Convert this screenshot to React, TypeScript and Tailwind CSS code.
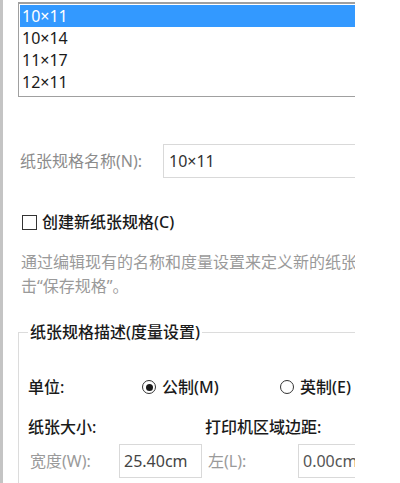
const font = "font-['Noto_Sans','Noto_Sans_CJK_SC',sans-serif]";

const sizes = ["10×11", "10×14", "11×17", "12×11"];

const Radio = ({ checked, label }: { checked?: boolean; label: string }) => (
  <div className="flex items-center">
    <span className="flex h-[14px] w-[14px] items-center justify-center rounded-full border border-[#333333] bg-white">
      {checked && <span className="h-[7px] w-[7px] rounded-full bg-[#1a1a1a]" />}
    </span>
    <span className="ml-[6px] font-medium text-[#1a1a1a]">{label}</span>
  </div>
);

const App = () => {
  return (
    <div className={`flex h-[483px] w-[400px] overflow-hidden bg-white text-[16px] ${font}`}>
      <div className="w-[3px] shrink-0 bg-[#c4c4c4]" />

      <div className="w-[352px] shrink-0 overflow-hidden pl-[15px]">
        {/* size list */}
        <div className="mt-[2px] w-[380px] border-t-2 border-b border-l border-[#a0a0a0] pt-[1px] pb-[3px] pl-[1px]">
          {sizes.map((s, i) => (
            <div
              key={s}
              className={`h-[22px] pl-[2px] leading-[22px] ${
                i === 0 ? "bg-[#3399ff] text-white" : "text-[#1a1a1a]"
              }`}
            >
              {s}
            </div>
          ))}
        </div>

        {/* name */}
        <div className="mt-[47px] flex items-center">
          <span className="w-[145px] shrink-0 pl-[2px] text-[#8c8c8c]">纸张规格名称(N):</span>
          <div className="flex h-[34px] w-[220px] shrink-0 items-center border border-[#d9d9d9] pl-[5px] text-[#333333]">
            10×11
          </div>
        </div>

        {/* checkbox */}
        <div className="mt-[33px] flex h-[22px] items-center pl-[4px]">
          <span className="h-[15px] w-[15px] shrink-0 border border-[#333333] bg-white" />
          <span className="ml-[5px] font-medium text-[#1a1a1a]">创建新纸张规格(C)</span>
        </div>

        <p className="mt-[17px] w-[360px] pl-[3px] leading-[24px] text-[#9a9a9a]">
          <span className="block whitespace-nowrap">通过编辑现有的名称和度量设置来定义新的纸张规格，然后单</span>
          <span className="block">击“保存规格”。</span>
        </p>

        {/* group */}
        <fieldset className="mt-[23px] h-[200px] w-[380px] border border-[#dcdcdc] pl-[9px]">
          <legend className="px-[2px] leading-[22px] font-medium text-[#1a1a1a]">纸张规格描述(度量设置)</legend>

          <div className="mt-[33px] flex h-[22px] items-center">
            <span className="w-[114px] shrink-0 font-medium text-[#1a1a1a]">单位:</span>
            <div className="w-[138px] shrink-0">
              <Radio checked label="公制(M)" />
            </div>
            <Radio label="英制(E)" />
          </div>

          <div className="mt-[18px] flex h-[22px] items-center font-medium text-[#1a1a1a]">
            <span className="w-[177px] shrink-0">纸张大小:</span>
            <span>打印机区域边距:</span>
          </div>

          <div className="mt-[6px] flex items-center">
            <span className="w-[91px] shrink-0 pl-[2px] text-[#9a9a9a]">宽度(W):</span>
            <div className="flex h-[34px] w-[83px] shrink-0 items-center border border-[#d9d9d9] pl-[4px] text-[#444444]">
              25.40cm
            </div>
            <span className="w-[96px] shrink-0 pl-[6px] text-[#9a9a9a]">左(L):</span>
            <div className="flex h-[34px] w-[80px] shrink-0 items-center border border-[#d9d9d9] pl-[4px] text-[#555555]">
              0.00cm
            </div>
          </div>
        </fieldset>
      </div>
    </div>
  );
};

export default App;
